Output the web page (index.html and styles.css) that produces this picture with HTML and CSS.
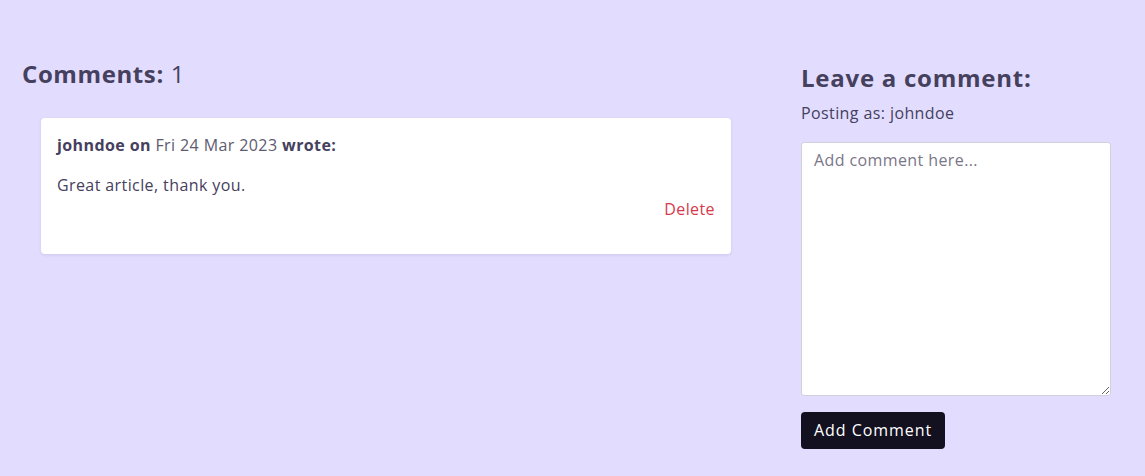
FILE: index.html
```html
<!DOCTYPE html>
<html lang="en">
<head>
<meta charset="utf-8">
<title>Comments</title>
<link rel="stylesheet" href="styles.css">
</head>
<body>
<main class="page">
  <section class="comments">
    <h2 class="comments-title">Comments: <span class="count">1</span></h2>
    <article class="card">
      <p class="meta"><strong>johndoe on</strong> <span class="date">Fri 24 Mar 2023</span> <strong>wrote:</strong></p>
      <p class="body">Great article, thank you.</p>
      <div class="actions"><button class="delete">Delete</button></div>
    </article>
  </section>
  <aside class="form">
    <h2 class="form-title">Leave a comment:</h2>
    <p class="posting">Posting as: johndoe</p>
    <textarea class="input" placeholder="Add comment here..."></textarea>
    <button class="submit">Add Comment</button>
  </aside>
</main>
</body>
</html>
```

FILE: styles.css
```css
html, body {
  margin: 0;
  padding: 0;
  background: #e2ddfe;
}
body {
  font-family: "Open Sans", "DejaVu Sans", sans-serif;
  color: #45405d;
  font-size: 16px;
  letter-spacing: 0.4px;
}
.page {
  display: grid;
  grid-template-columns: 730px 310px;
  column-gap: 49px;
  padding: 0 0 0 22px;
}
.comments-title {
  margin: 59px 0 0;
  font-size: 24px;
  font-weight: 700;
  line-height: 30px;
  letter-spacing: 0.6px;
}
.count {
  font-weight: 400;
}
.card {
  margin: 29px 0 0 19px;
  width: 690px;
  box-sizing: border-box;
  background: #fff;
  border-radius: 4px;
  box-shadow: 0 1px 3px rgba(60, 50, 120, 0.12);
  padding: 16px 16px 34px;
}
.meta {
  margin: 0;
  line-height: 22px;
}
.meta strong { font-weight: 700; }
.date { color: #5e5a70; }
.body {
  margin: 18px 0 0;
  line-height: 22px;
}
.actions {
  display: flex;
  justify-content: flex-end;
  margin-top: 2px;
}
.delete {
  background: none;
  border: 0;
  padding: 0;
  font: inherit;
  letter-spacing: inherit;
  color: #d63a4c;
  line-height: 22px;
  cursor: pointer;
}
.form {
  display: flex;
  flex-direction: column;
  align-items: flex-start;
  padding-top: 63px;
}
.form-title {
  margin: 0;
  font-size: 24px;
  font-weight: 700;
  line-height: 30px;
  letter-spacing: 0.75px;
}
.posting {
  margin: 9px 0 0;
  line-height: 22px;
}
.input {
  margin-top: 18px;
  width: 310px;
  height: 254px;
  box-sizing: border-box;
  border: 1px solid #d3d0de;
  border-radius: 3px;
  background: #fff;
  padding: 6px 12px;
  font: inherit;
  letter-spacing: inherit;
  color: #45405d;
  line-height: 22px;
}
.input::placeholder {
  color: #7a7688;
}
.submit {
  margin-top: 16px;
  background: #13101f;
  color: #fff;
  border: 0;
  border-radius: 4px;
  font: inherit;
  letter-spacing: 0.95px;
  padding: 7px 13px;
  line-height: 23px;
  height: 37px;
  cursor: pointer;
}
```
